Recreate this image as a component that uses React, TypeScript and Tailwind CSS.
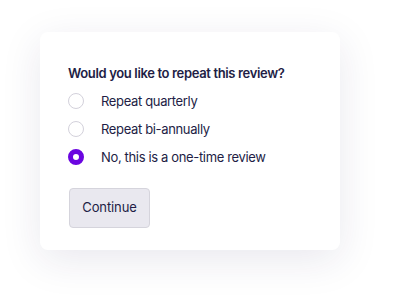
import { useState } from "react";

const options = [
  { id: "quarterly", label: "Repeat quarterly" },
  { id: "biannual", label: "Repeat bi-annually" },
  { id: "once", label: "No, this is a one-time review" },
];

export default function App() {
  const [value, setValue] = useState("once");

  return (
    <div className="min-h-[298px] w-[396px] bg-white pl-[40px] pt-[32px] font-['Inter',sans-serif] text-[#221d45]">
      <div className="w-[300px] rounded-[8px] bg-white px-[28px] pb-[22px] pt-[31px] shadow-[0_10px_40px_rgba(40,30,90,0.10)]">
        <h2 className="text-[13px] font-semibold leading-[20px] tracking-[-0.35px]">
          Would you like to repeat this review?
        </h2>
        <div className="mt-[4px] flex flex-col">
          {options.map((opt) => {
            const checked = value === opt.id;
            return (
              <label
                key={opt.id}
                className="flex h-[28px] cursor-pointer items-center"
                onClick={() => setValue(opt.id)}
              >
                <span
                  className={
                    checked
                      ? "h-[16px] w-[16px] rounded-full border-[5px] border-[#6a05e0] bg-white"
                      : "h-[16px] w-[16px] rounded-full border border-[#d3d1db] bg-white"
                  }
                />
                <span className="ml-[17px] text-[13px] leading-[20px] tracking-[-0.35px]">
                  {opt.label}
                </span>
              </label>
            );
          })}
        </div>
        <button
          type="button"
          className="mt-[17px] ml-px h-[40px] w-[81px] rounded-[4px] border border-[#d5d4dc] bg-[#e9e8ef] text-[13px] tracking-[-0.1px] text-[#221d45]"
        >
          Continue
        </button>
      </div>
    </div>
  );
}
